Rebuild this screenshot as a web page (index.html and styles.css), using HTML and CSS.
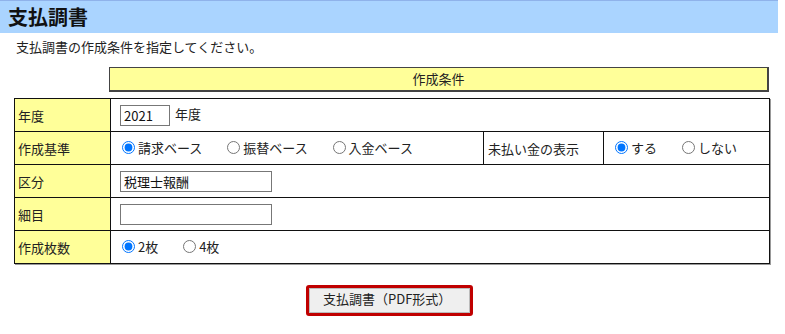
FILE: index.html
```html
<!DOCTYPE html>
<html lang="ja">
<head>
  <meta charset="UTF-8" />
  <title>支払調書</title>
  <link rel="stylesheet" href="styles.css">
</head>
<body>
  <h1 class="page-title">支払調書</h1>
  <p class="lead">支払調書の作成条件を指定してください。</p>

  <div class="form-wrap">
    <div class="cond-head">作成条件</div>

    <table class="cond">
      <colgroup>
        <col class="c-label">
        <col class="c-main">
        <col class="c-sub">
        <col class="c-opt">
      </colgroup>
      <tr>
        <th>年度</th>
        <td colspan="3">
          <input type="text" class="year" value="2021"> 年度
        </td>
      </tr>
      <tr>
        <th>作成基準</th>
        <td>
          <label class="opt"><input type="radio" name="base" checked>請求ベース</label>
          <label class="opt"><input type="radio" name="base">振替ベース</label>
          <label class="opt"><input type="radio" name="base">入金ベース</label>
        </td>
        <td class="sub-label">未払い金の表示</td>
        <td>
          <label class="opt"><input type="radio" name="unpaid" checked>する</label>
          <label class="opt"><input type="radio" name="unpaid">しない</label>
        </td>
      </tr>
      <tr>
        <th>区分</th>
        <td colspan="3"><input type="text" class="wide" value="税理士報酬"></td>
      </tr>
      <tr>
        <th>細目</th>
        <td colspan="3"><input type="text" class="wide"></td>
      </tr>
      <tr>
        <th>作成枚数</th>
        <td colspan="3">
          <label class="opt"><input type="radio" name="copies" checked>2枚</label>
          <label class="opt"><input type="radio" name="copies">4枚</label>
        </td>
      </tr>
    </table>

    <div class="actions">
      <button class="pdf-btn">支払調書（PDF形式）</button>
    </div>
  </div>
</body>
</html>
```

FILE: styles.css
```css
body {
  margin: 0;
  font-family: "Noto Sans CJK JP", "Noto Sans", sans-serif;
  font-size: 13px;
  color: #222;
  background: #fff;
}

.page-title {
  width: 778px;
  height: 33px;
  margin: 0;
  padding-left: 8px;
  box-sizing: border-box;
  border-top: 1px solid #8fb2ea;
  background: #aad4ff;
  font-size: 20px;
  font-weight: bold;
  line-height: 32px;
  color: #111;
}

.lead {
  margin: 4px 0 0 16px;
  line-height: 20px;
}

.form-wrap {
  width: 755px;
  margin: 10px 0 0 14px;
}

.cond-head {
  margin-left: 95px;
  height: 22px;
  line-height: 22px;
  border: 1px solid #444;
  border-right-width: 2px;
  border-bottom-width: 2px;
  background: #ffff99;
  text-align: center;
}

.cond {
  margin-top: 6px;
  width: 755px;
  table-layout: fixed;
  border-collapse: collapse;
  border: 1px solid #111;
  box-shadow: 1px 1px 0 #999;
}

.c-label { width: 96px; }
.c-main { width: 373px; }
.c-sub { width: 120px; }
.c-opt { width: 166px; }

.cond th,
.cond td {
  height: 32px;
  padding: 0 0 0 4px;
  border: 1px solid #111;
  text-align: left;
  font-weight: normal;
  vertical-align: middle;
  white-space: nowrap;
}

.cond th {
  background: #ffff99;
  padding-left: 3px;
}

.cond td {
  padding-left: 9px;
}

.cond .sub-label {
  padding-left: 4px;
}

.opt {
  display: inline-flex;
  align-items: center;
  margin-right: 20px;
}

.opt input {
  width: 13px;
  height: 13px;
  margin: 0 3px 0 2px;
}

input[type="text"] {
  height: 21px;
  box-sizing: border-box;
  padding: 1px 3px;
  border: 1px solid #777;
  font-family: inherit;
  font-size: 13px;
  color: #111;
  vertical-align: middle;
}

.year {
  width: 50px;
  margin-right: 2px;
}

.wide {
  width: 152px;
}

.actions {
  margin-top: 21px;
  text-align: center;
}

.pdf-btn {
  width: 167px;
  height: 31px;
  margin-left: -4px;
  padding: 0 0 4px 14px;
  border: 3px solid #c00000;
  border-radius: 3px;
  background: #efefef;
  box-shadow: inset 0 0 0 1px #bbb;
  font-family: inherit;
  font-size: 13px;
  color: #222;
  text-align: left;
}
```
